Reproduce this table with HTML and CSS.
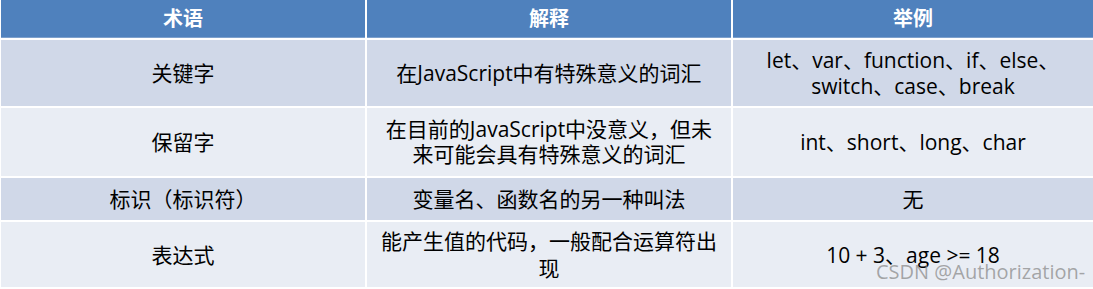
FILE: index.html
```html
<!DOCTYPE html>
<html lang="zh">
<head>
<meta charset="utf-8">
<link rel="stylesheet" href="styles.css">
</head>
<body>
<div class="sheet">
  <div class="grid">
    <div class="cell head">术语</div>
    <div class="cell head">解释</div>
    <div class="cell head">举例</div>

    <div class="cell odd">关键字</div>
    <div class="cell odd">在JavaScript中有特殊意义的词汇</div>
    <div class="cell odd">let、var、function、if、else、<br>switch、case、break</div>

    <div class="cell even">保留字</div>
    <div class="cell even wrap">在目前的JavaScript中没意义，但未<br>来可能会具有特殊意义的词汇</div>
    <div class="cell even">int、short、long、char</div>

    <div class="cell odd">标识（标识符）</div>
    <div class="cell odd">变量名、函数名的另一种叫法</div>
    <div class="cell odd">无</div>

    <div class="cell even">表达式</div>
    <div class="cell even wrap2">能产生值的代码，一般配合运算符出<br>现</div>
    <div class="cell even">10 + 3、age &gt;= 18</div>
  </div>
  <div class="watermark">CSDN @Authorization-</div>
</div>
</body>
</html>
```

FILE: styles.css
```css
html, body {
  margin: 0;
  padding: 0;
  background: #ffffff;
}
.sheet {
  position: relative;
  width: 1093px;
  height: 289px;
  background: #ffffff;
  font-family: "Open Sans", "Noto Sans CJK SC", sans-serif;
  font-size: 21px;
  color: #000;
}
.grid {
  display: grid;
  grid-template-columns: 364px 364px 360px;
  grid-template-rows: 38px 66px 68px 42px 65px;
  column-gap: 2px;
  row-gap: 2px;
  padding-left: 1px;
}
.cell {
  display: flex;
  align-items: center;
  justify-content: center;
  text-align: center;
  line-height: 26px;
  padding: 0 8px;
  white-space: nowrap;
}
.head {
  background: #4f81bd;
  color: #ffffff;
  font-weight: bold;
  font-size: 20px;
  margin-bottom: 1px;
  height: 38px;
  box-sizing: border-box;
  border-bottom: 1px solid #7da0cc;
}
.odd {
  background: #d0d8e8;
}
.even {
  background: #e9edf4;
}
.wrap {
  line-height: 25px;
}
.wrap2 {
  line-height: 27px;
}
.watermark {
  position: absolute;
  left: 876px;
  top: 258px;
  font-family: "Open Sans", "Noto Sans", sans-serif;
  font-size: 20px;
  color: rgba(140, 140, 140, 0.75);
  white-space: nowrap;
}
```
